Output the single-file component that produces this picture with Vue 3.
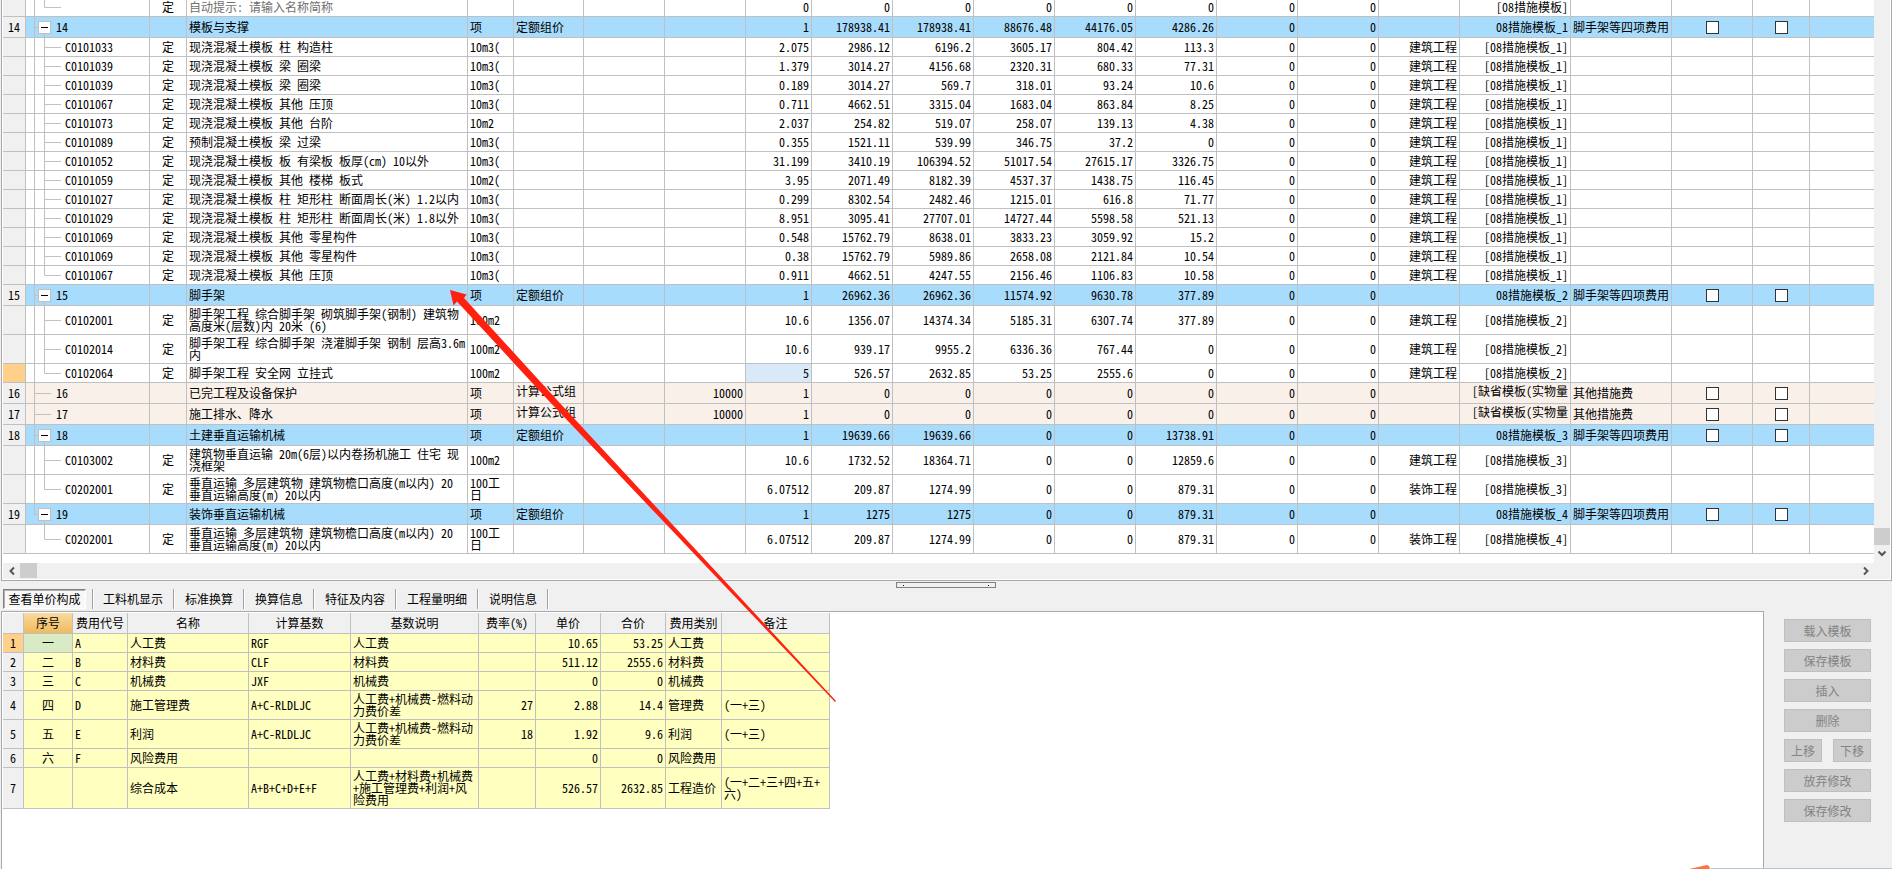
<script setup>
import { ref } from 'vue'

const z = ['0', '0']

const detail = (code, name, unit, nums, work, tpl, opts = {}) => ({
  kind: 'detail', code, mark: '定', name, unit, nums: [...nums, ...z], work, tpl, h: 19, ...opts,
})
const group = (no, name, nums, tpl, opts = {}) => ({
  kind: 'group', no, code: no, name, unit: '项', mode: '定额组价', nums: [...nums, ...z], tpl,
  fee: '脚手架等四项费用', checks: true, h: 21, ...opts,
})
const plain = (no, name) => ({
  kind: 'plain', no, code: no, name, unit: '项', mode: '计算公式组', base: '10000',
  nums: ['1', '0', '0', '0', '0', '0', ...z], tpl: '[缺省模板(实物量', fee: '其他措施费', checks: true, clip: true, h: 21,
})

const t1 = '[08措施模板_1]'
const t2 = '[08措施模板_2]'
const jz = '建筑工程'
const zs = '装饰工程'
const m = '现浇混凝土模板 '

const rows = [
  detail('', '自动提示: 请输入名称简称', '', ['0', '0', '0', '0', '0', '0'], '', '[08措施模板]', { last: true, hint: true }),
  group('14', '模板与支撑', ['1', '178938.41', '178938.41', '88676.48', '44176.05', '4286.26'], '08措施模板_1'),
  detail('C0101033', m + '柱 构造柱', '10m3(', ['2.075', '2986.12', '6196.2', '3605.17', '804.42', '113.3'], jz, t1),
  detail('C0101039', m + '梁 圈梁', '10m3(', ['1.379', '3014.27', '4156.68', '2320.31', '680.33', '77.31'], jz, t1),
  detail('C0101039', m + '梁 圈梁', '10m3(', ['0.189', '3014.27', '569.7', '318.01', '93.24', '10.6'], jz, t1),
  detail('C0101067', m + '其他 压顶', '10m3(', ['0.711', '4662.51', '3315.04', '1683.04', '863.84', '8.25'], jz, t1),
  detail('C0101073', m + '其他 台阶', '10m2', ['2.037', '254.82', '519.07', '258.07', '139.13', '4.38'], jz, t1),
  detail('C0101089', '预制混凝土模板 梁 过梁', '10m3(', ['0.355', '1521.11', '539.99', '346.75', '37.2', '0'], jz, t1),
  detail('C0101052', m + '板 有梁板 板厚(cm) 10以外', '10m3(', ['31.199', '3410.19', '106394.52', '51017.54', '27615.17', '3326.75'], jz, t1),
  detail('C0101059', m + '其他 楼梯 板式', '10m2(', ['3.95', '2071.49', '8182.39', '4537.37', '1438.75', '116.45'], jz, t1),
  detail('C0101027', m + '柱 矩形柱 断面周长(米) 1.2以内', '10m3(', ['0.299', '8302.54', '2482.46', '1215.01', '616.8', '71.77'], jz, t1),
  detail('C0101029', m + '柱 矩形柱 断面周长(米) 1.8以外', '10m3(', ['8.951', '3095.41', '27707.01', '14727.44', '5598.58', '521.13'], jz, t1),
  detail('C0101069', m + '其他 零星构件', '10m3(', ['0.548', '15762.79', '8638.01', '3833.23', '3059.92', '15.2'], jz, t1),
  detail('C0101069', m + '其他 零星构件', '10m3(', ['0.38', '15762.79', '5989.86', '2658.08', '2121.84', '10.54'], jz, t1),
  detail('C0101067', m + '其他 压顶', '10m3(', ['0.911', '4662.51', '4247.55', '2156.46', '1106.83', '10.58'], jz, t1, { last: true }),
  group('15', '脚手架', ['1', '26962.36', '26962.36', '11574.92', '9630.78', '377.89'], '08措施模板_2'),
  detail('C0102001', '脚手架工程 综合脚手架 砌筑脚手架(钢制) 建筑物\n高度米(层数)内 20米 (6)', '100m2', ['10.6', '1356.07', '14374.34', '5185.31', '6307.74', '377.89'], jz, t2, { h: 29 }),
  detail('C0102014', '脚手架工程 综合脚手架 浇灌脚手架 钢制 层高3.6m\n内', '100m2', ['10.6', '939.17', '9955.2', '6336.36', '767.44', '0'], jz, t2, { h: 29 }),
  detail('C0102064', '脚手架工程 安全网 立挂式', '100m2', ['5', '526.57', '2632.85', '53.25', '2555.6', '0'], jz, t2, { last: true, current: true }),
  plain('16', '已完工程及设备保护'),
  plain('17', '施工排水、降水'),
  group('18', '土建垂直运输机械', ['1', '19639.66', '19639.66', '0', '0', '13738.91'], '08措施模板_3'),
  detail('C0103002', '建筑物垂直运输 20m(6层)以内卷扬机施工 住宅 现\n浇框架', '100m2', ['10.6', '1732.52', '18364.71', '0', '0', '12859.6'], jz, '[08措施模板_3]', { h: 29 }),
  detail('C0202001', '垂直运输 多层建筑物 建筑物檐口高度(m以内) 20\n垂直运输高度(m) 20以内', '100工\n日', ['6.07512', '209.87', '1274.99', '0', '0', '879.31'], zs, '[08措施模板_3]', { h: 29, last: true }),
  group('19', '装饰垂直运输机械', ['1', '1275', '1275', '0', '0', '879.31'], '08措施模板_4', { lastGroup: true }),
  detail('C0202001', '垂直运输 多层建筑物 建筑物檐口高度(m以内) 20\n垂直运输高度(m) 20以内', '100工\n日', ['6.07512', '209.87', '1274.99', '0', '0', '879.31'], zs, '[08措施模板_4]', { h: 29, last: true, noRoot: true }),
]

const tabs = ['查看单价构成', '工料机显示', '标准换算', '换算信息', '特征及内容', '工程量明细', '说明信息']
const active = ref(0)

const heads = ['序号', '费用代号', '名称', '计算基数', '基数说明', '费率(%)', '单价', '合价', '费用类别', '备注']
const fuel = '人工费+机械费-燃料动\n力费价差'
const costs = [
  { h: 19, c: ['一', 'A', '人工费', 'RGF', '人工费', '', '10.65', '53.25', '人工费', ''] },
  { h: 19, c: ['二', 'B', '材料费', 'CLF', '材料费', '', '511.12', '2555.6', '材料费', ''] },
  { h: 19, c: ['三', 'C', '机械费', 'JXF', '机械费', '', '0', '0', '机械费', ''] },
  { h: 29, c: ['四', 'D', '施工管理费', 'A+C-RLDLJC', fuel, '27', '2.88', '14.4', '管理费', '(一+三)'] },
  { h: 29, c: ['五', 'E', '利润', 'A+C-RLDLJC', fuel, '18', '1.92', '9.6', '利润', '(一+三)'] },
  { h: 19, c: ['六', 'F', '风险费用', '', '', '', '0', '0', '风险费用', ''] },
  { h: 41, c: ['', '', '综合成本', 'A+B+C+D+E+F', '人工费+材料费+机械费\n+施工管理费+利润+风\n险费用', '', '526.57', '2632.85', '工程造价', '(一+二+三+四+五+\n六)'] },
]
</script>

<template>
  <main class="page">
    <section class="upper">
      <div class="upper-row">
        <div class="grid-view">
          <table class="grid main-grid">
            <colgroup>
              <col class="c-head"><col class="c-tree"><col class="c-mark"><col class="c-name"><col class="c-unit">
              <col class="c-mode"><col class="c-num"><col class="c-num"><col class="c-qty">
              <col v-for="n in 7" :key="n" class="c-num">
              <col class="c-num"><col class="c-tpl"><col class="c-fee"><col class="c-num"><col class="c-flag"><col>
            </colgroup>
            <tbody>
              <tr v-for="(r, i) in rows" :key="i" :class="[r.kind, 'h' + r.h, { current: r.current }]">
                <th scope="row">{{ r.no }}</th>
                <td class="tree">
                  <div class="tree-cell">
                    <svg v-if="r.kind === 'detail'" width="39" :height="r.h - 1" class="lines">
                      <path v-if="!r.noRoot" :d="`M8.5 0V${r.h}`" />
                      <path :d="r.last ? `M18.5 0V${(r.h - 1) / 2 + .5}H35` : `M18.5 0V${r.h}M18.5 ${(r.h - 1) / 2 + .5}H35`" />
                    </svg>
                    <svg v-else-if="r.kind === 'group'" width="30" height="20" class="lines">
                      <path :d="r.lastGroup ? 'M8.5 0V10.5H12' : 'M8.5 0V20M8.5 10.5H12'" />
                      <path d="M18.5 16V20" />
                      <rect x="12.5" y="4.5" width="12" height="12" fill="#fff" />
                      <path d="M15 10.5H22" class="minus" />
                    </svg>
                    <svg v-else width="30" height="20" class="lines">
                      <path d="M8.5 0V20M8.5 10.5H25" />
                    </svg>
                    <span>{{ r.code }}</span>
                  </div>
                </td>
                <td class="mid">{{ r.mark }}</td>
                <td :class="{ hint: r.hint }">{{ r.name }}</td>
                <td>{{ r.unit }}</td>
                <td :class="{ clip: r.clip }">{{ r.mode }}</td>
                <td></td>
                <td class="num">{{ r.base }}</td>
                <td v-for="(n, k) in r.nums" :key="k" class="num" :class="{ cell: r.current && k === 0 }">{{ n }}</td>
                <td class="num">{{ r.work }}</td>
                <td class="num" :class="{ clip: r.clip }">{{ r.tpl }}</td>
                <td>{{ r.fee }}</td>
                <td class="mid"><input v-if="r.checks" type="checkbox" :aria-label="r.name + ' 1'"></td>
                <td class="mid"><input v-if="r.checks" type="checkbox" :aria-label="r.name + ' 2'"></td>
                <td class="end"></td>
              </tr>
            </tbody>
          </table>
        </div>
        <div class="vbar">
          <div class="vthumb"></div>
          <button type="button" aria-label="向下滚动">
            <svg width="10" height="8"><path d="M1.5 1.5L5 5L8.5 1.5" class="chev" /></svg>
          </button>
        </div>
      </div>
      <div class="hbar">
        <button type="button" aria-label="向左滚动">
          <svg width="8" height="10"><path d="M6 1.5L2.5 5L6 8.5" class="chev" /></svg>
        </button>
        <div class="hthumb"></div>
        <button type="button" class="right" aria-label="向右滚动">
          <svg width="8" height="10"><path d="M2 1.5L5.5 5L2 8.5" class="chev" /></svg>
        </button>
      </div>
    </section>

    <div class="splitter"><span class="grip"><i></i><i></i></span></div>

    <nav class="tabs">
      <button v-for="(t, i) in tabs" :key="t" type="button" :class="{ on: i === active }" @click="active = i">{{ t }}</button>
    </nav>

    <section class="lower">
      <div class="sheet">
        <table class="grid cost-grid">
          <colgroup>
            <col class="k0"><col class="k1"><col class="k2"><col class="k3"><col class="k4"><col class="k5">
            <col class="k6"><col class="k7"><col class="k7"><col class="k8"><col class="k9">
          </colgroup>
          <thead>
            <tr class="h21"><th></th><th v-for="(h, i) in heads" :key="h" scope="col" :class="{ picked: i === 0 }">{{ h }}</th></tr>
          </thead>
          <tbody>
            <tr v-for="(r, i) in costs" :key="i" :class="['h' + r.h, { first: i === 0 }]">
              <th scope="row">{{ i + 1 }}</th>
              <td v-for="(c, k) in r.c" :key="k" :class="{ mid: k === 0, num: k > 4 && k < 8 }">{{ c }}</td>
            </tr>
          </tbody>
        </table>
      </div>
      <aside class="actions">
        <button type="button" disabled>载入模板</button>
        <button type="button" disabled>保存模板</button>
        <button type="button" disabled>插入</button>
        <button type="button" disabled>删除</button>
        <div class="pair">
          <button type="button" disabled>上移</button>
          <button type="button" disabled>下移</button>
        </div>
        <button type="button" disabled>放弃修改</button>
        <button type="button" disabled>保存修改</button>
      </aside>
      <div class="bottom-edge">
        <svg width="22" height="4"><path d="M0 4L18 0L20 1L21 4Z" fill="#ff7340" /></svg>
        <span></span>
      </div>
    </section>

    <svg class="arrow" width="840" height="706" aria-hidden="true">
      <polygon points="450,290 466.5,294.5 464,298 557,400 836,701 835,702 548,400 457,301.5 453.5,305.5" />
    </svg>
  </main>
</template>

<style>
body {
  margin: 0;
  background: #f0f0f0;
}
</style>

<style scoped>
.page {
  position: relative;
  display: flex;
  flex-direction: column;
  min-height: 100vh;
  overflow: hidden;
  color: #000;
  font-family: "Noto Sans CJK SC", sans-serif;
  font-size: 12px;
  line-height: 12px;
  font-feature-settings: "hwid" 1;
}
button {
  padding: 0;
  font: inherit;
  font-feature-settings: inherit;
}
.upper {
  margin-left: 1px;
  padding: 0 1px 1px;
  background: #fff;
  border: solid #a9a9ad;
  border-width: 0 1px 1px;
}
.upper-row {
  display: flex;
}
.grid-view {
  flex: 1;
  min-width: 0;
  overflow: hidden;
  padding-bottom: 9px;
}
.grid {
  table-layout: fixed;
  border-collapse: separate;
  border-spacing: 0;
}
.main-grid {
  width: 100%;
  margin-top: -2px;
}
.grid th,
.grid td {
  box-sizing: border-box;
  padding: 0 2px;
  border: solid #c0c0c0;
  border-width: 0 1px 1px 0;
  overflow: hidden;
  white-space: pre;
  text-align: left;
  vertical-align: middle;
}
.grid th {
  padding: 0;
  background: #f0f0f0;
  font-weight: normal;
  text-align: center;
}
.grid td.end {
  border-right: 0;
}
.grid .num {
  padding: 0 2px;
  text-align: right;
}
.grid .mid {
  text-align: center;
}
.grid .clip {
  padding-bottom: 4px;
}
.h19 > * { height: 19px; }
.h21 > * { height: 21px; }
.h29 > * { height: 29px; }
.h41 > * { height: 41px; }
.c-head { width: 23px; }
.c-tree { width: 124px; }
.c-mark { width: 37px; }
.c-name { width: 281px; }
.c-unit { width: 46px; }
.c-mode { width: 70px; }
.c-num { width: 81px; }
.c-qty { width: 66px; }
.c-tpl { width: 111px; }
.c-fee { width: 101px; }
.c-flag { width: 57px; }
.group td { background: #a8dcfc; }
.plain td { background: #f9f0ea; }
.current th { background: #ffd08a; }
.current td.cell { background: #d9e9f8; }
.grid td.tree { padding: 0; }
.hint { color: #707070; }
.tree-cell {
  display: flex;
  align-items: center;
}
.lines {
  display: block;
  flex: none;
  fill: none;
  stroke: #c0c0c0;
  stroke-width: 1;
}
.lines .minus { stroke: #000; }
input[type="checkbox"] {
  display: block;
  box-sizing: border-box;
  width: 13px;
  height: 13px;
  margin: 0 auto;
  appearance: none;
  border: 1px solid #333;
  background: #fff;
}
input[type="checkbox"]:checked { background: #333; }
.vbar {
  display: flex;
  flex-direction: column;
  justify-content: flex-end;
  width: 16px;
  background: #f0f0f0;
}
.vthumb {
  height: 17px;
  background: #cdcdcd;
}
.vbar button,
.hbar button {
  display: grid;
  place-items: center;
  width: 17px;
  height: 16px;
  border: 0;
  background: transparent;
}
.vbar button {
  width: 16px;
  height: 18px;
}
.chev {
  fill: none;
  stroke: #555;
  stroke-width: 2;
}
.hbar {
  display: flex;
  height: 16px;
  padding-right: 16px;
  background: #f0f0f0;
}
.hthumb {
  width: 17px;
  height: 15px;
  background: #cdcdcd;
}
.hbar .right { margin-left: auto; }
.splitter {
  display: flex;
  justify-content: center;
  padding: 1px 0;
}
.grip {
  box-sizing: border-box;
  display: flex;
  align-items: center;
  justify-content: space-between;
  width: 100px;
  height: 6px;
  padding: 0 6px;
  border: 1px solid #808080;
}
.grip i {
  width: 1px;
  height: 1px;
  background: #000080;
}
.tabs {
  display: flex;
  padding: 0 3px 2px;
}
.tabs button {
  height: 20px;
  padding: 0 10px;
  border: solid #a0a0a0;
  border-width: 0 1px 0 0;
  background: transparent;
  box-shadow: 1px 0 #fff;
  margin-right: 1px;
}
.tabs button:first-child {
  position: relative;
  width: 83px;
  margin-right: 7px;
  padding: 0;
  border: 0;
  box-shadow: none;
}
.tabs button:nth-child(2) {
  box-shadow: 1px 0 #fff, inset 1px 0 #fff, -1px 0 #a0a0a0;
}
.tabs .on {
  background: #f8f8f8;
}
.tabs button.on:first-child {
  border: solid;
  border-width: 1px;
  border-color: #808080 #fff #fff #808080;
  box-shadow: inset 1px 1px #b0b0b0;
}
.lower {
  position: relative;
  display: flex;
  flex: 1;
}
.sheet {
  flex: 1;
  margin-left: 1px;
  padding: 1px;
  border: solid #a9a9ad;
  border-width: 1px 1px 0;
  background: #fff;
}
.k0 { width: 21px; }
.k1 { width: 49px; }
.k2 { width: 55px; }
.k3 { width: 121px; }
.k4 { width: 102px; }
.k5 { width: 128px; }
.k6 { width: 57px; }
.k7 { width: 65px; }
.k8 { width: 56px; }
.k9 { width: 108px; }
.cost-grid { width: 827px; }
.cost-grid td { background: #ffffc0; }
.cost-grid th.picked { background: linear-gradient(#f9d9a0, #f0bb5e); }
.cost-grid .first th { background: #ffd08a; }
.cost-grid .first td.mid { background: #d8ebc4; }
.actions {
  display: flex;
  flex-direction: column;
  gap: 7px;
  box-sizing: border-box;
  width: 128px;
  padding: 8px 21px 0 20px;
}
.actions button {
  box-sizing: border-box;
  height: 23px;
  border: 1px solid #bfbfbf;
  background: #cccccc;
  color: #838383;
}
.pair {
  display: flex;
  gap: 11px;
}
.pair button { flex: 1; }
.bottom-edge {
  position: absolute;
  right: 0;
  bottom: 0;
  display: flex;
  align-items: flex-end;
  width: 203px;
}
.bottom-edge svg {
  display: block;
  flex: none;
}
.bottom-edge span {
  flex: 1;
  height: 1px;
  background: #b0c4d4;
}
.arrow {
  position: absolute;
  left: 0;
  top: 0;
  pointer-events: none;
  fill: #ff2010;
}
</style>
